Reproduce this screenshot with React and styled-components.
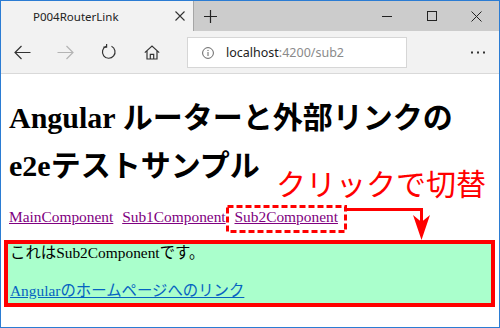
import React from 'react';
import styled, { createGlobalStyle } from 'styled-components';

const GlobalStyle = createGlobalStyle`
	html, body {
		margin: 0;
		padding: 0;
		width: 500px;
		height: 328px;
		overflow: hidden;
		background: #fff;
	}
	* {
		box-sizing: border-box;
	}
`;

const uiFont = `"Noto Sans", "Noto Sans CJK JP", sans-serif`;
const pageFont = `"Liberation Serif", "Noto Sans CJK JP", serif`;

export default function App() {
	return (
		<>
			<GlobalStyle />
			<Window>
				<TabStrip>
					<Tab>
						<TabTitle>P004RouterLink</TabTitle>
						<TabClose>
							<svg width="10" height="10" viewBox="0 0 10 10">
								<path d="M0.5 0.5 L9.5 9.5 M9.5 0.5 L0.5 9.5" stroke="#333" strokeWidth="1.1" />
							</svg>
						</TabClose>
					</Tab>
					<NewTab>
						<svg width="13" height="13" viewBox="0 0 13 13">
							<path d="M6.5 0 V13 M0 6.5 H13" stroke="#222" strokeWidth="1.2" />
						</svg>
					</NewTab>
					<Spacer />
					<WinButton>
						<svg width="10" height="10" viewBox="0 0 10 10">
							<path d="M0 5.5 H10" stroke="#222" strokeWidth="1" />
						</svg>
					</WinButton>
					<WinButton>
						<svg width="10" height="10" viewBox="0 0 10 10">
							<rect x="0.5" y="0.5" width="9" height="9" fill="none" stroke="#222" strokeWidth="1" />
						</svg>
					</WinButton>
					<WinButton>
						<svg width="11" height="11" viewBox="0 0 11 11">
							<path d="M0.5 0.5 L10.5 10.5 M10.5 0.5 L0.5 10.5" stroke="#222" strokeWidth="1" />
						</svg>
					</WinButton>
				</TabStrip>

				<NavBar>
					<NavButton>
						<svg width="17" height="15" viewBox="0 0 17 15">
							<path d="M1 7.5 H16.5 M7.5 1 L1 7.5 L7.5 14" fill="none" stroke="#333" strokeWidth="1.2" />
						</svg>
					</NavButton>
					<NavButton>
						<svg width="17" height="15" viewBox="0 0 17 15">
							<path d="M0.5 7.5 H16 M9.5 1 L16 7.5 L9.5 14" fill="none" stroke="#b4b4b4" strokeWidth="1.2" />
						</svg>
					</NavButton>
					<NavButton>
						<svg width="16" height="16" viewBox="0 0 16 16">
							<path d="M5.2 2.2 A6.3 6.3 0 1 0 10.5 2.3" fill="none" stroke="#333" strokeWidth="1.2" />
							<path d="M5.6 0 V3.1 H2.4" fill="none" stroke="#333" strokeWidth="1.2" />
						</svg>
					</NavButton>
					<NavButton>
						<svg width="16" height="15" viewBox="0 0 16 15">
							<path
								d="M0.8 7.6 L8 1 L15.2 7.6 M3 5.6 V14 H13 V5.6 M6.3 14 V9.3 H9.7 V14"
								fill="none"
								stroke="#333"
								strokeWidth="1.2"
							/>
						</svg>
					</NavButton>
					<Address>
						<InfoIcon>
							<svg width="12" height="12" viewBox="0 0 12 12">
								<circle cx="6" cy="6" r="5.4" fill="none" stroke="#666" strokeWidth="1" />
								<path d="M6 5 V9" stroke="#666" strokeWidth="1" />
								<circle cx="6" cy="3.4" r="0.6" fill="#666" />
							</svg>
						</InfoIcon>
						<Host>localhost</Host>
						<UrlRest>:4200/sub2</UrlRest>
					</Address>
					<Spacer />
					<NavButton>
						<svg width="14" height="3" viewBox="0 0 14 3">
							<rect x="0" y="0.5" width="2" height="2" fill="#333" />
							<rect x="6" y="0.5" width="2" height="2" fill="#333" />
							<rect x="12" y="0.5" width="2" height="2" fill="#333" />
						</svg>
					</NavButton>
				</NavBar>

				<Page>
					<Title>Angular ルーターと外部リンクのe2eテストサンプル</Title>
					<Links>
						<RouteLink href="#main">MainComponent</RouteLink>{' '}
						<RouteLink href="#sub1">Sub1Component</RouteLink>{' '}
						<RouteLink href="#sub2">Sub2Component</RouteLink>
					</Links>
					<Outlet>
						<Message>これはSub2Componentです。</Message>
						<ExternalLink href="#angular">Angularのホームページへのリンク</ExternalLink>
					</Outlet>
				</Page>

				<Overlay width="500" height="328" viewBox="0 0 500 328">
					<rect
						x="227.5"
						y="206.5"
						width="118"
						height="25"
						fill="none"
						stroke="#ff0000"
						strokeWidth="3"
						strokeDasharray="6 3"
					/>
					<polyline points="345,209.5 421.5,209.5 421.5,224" fill="none" stroke="#ff0000" strokeWidth="3" />
					<path d="M413 215 L421.5 222 L430 215 L421.5 240 Z" fill="#ff0000" />
				</Overlay>
				<Callout>クリックで切替</Callout>
			</Window>
		</>
	);
}

const Window = styled.div`
	position: relative;
	display: flex;
	flex-direction: column;
	width: 500px;
	height: 328px;
	border: 1px solid #2b7cd3;
	overflow: hidden;
	background: #fff;
`;

const TabStrip = styled.div`
	display: flex;
	align-items: stretch;
	height: 30px;
	background-color: #cccccc;
	font-family: ${uiFont};
`;

const Tab = styled.div`
	display: flex;
	align-items: center;
	width: 193px;
	padding-left: 32px;
	background-color: #f2f2f2;
	border-right: 1px solid #a6a6a6;
`;

const TabTitle = styled.span`
	flex: 1;
	font-size: 11.5px;
	color: #222;
	white-space: nowrap;
`;

const IconButton = styled.div`
	display: flex;
	align-items: center;
	justify-content: center;
	flex-shrink: 0;
`;

const TabClose = styled(IconButton)`
	width: 26px;
	height: 100%;
`;

const NewTab = styled(IconButton)`
	width: 33px;
	height: 100%;
`;

const WinButton = styled(IconButton)`
	width: 45px;
	height: 100%;
`;

const Spacer = styled.div`
	flex: 1;
`;

const NavBar = styled.div`
	display: flex;
	align-items: center;
	height: 43px;
	background-color: #f2f2f2;
	border-bottom: 1px solid #d9d9d9;
	font-family: ${uiFont};
`;

const NavButton = styled(IconButton)`
	width: 43px;
	height: 100%;
`;

const Address = styled.div`
	display: flex;
	align-items: center;
	width: 220px;
	height: 31px;
	margin-left: 14px;
	margin-top: 1px;
	padding-left: 14px;
	background-color: #fff;
	border: 1px solid #d6d6d6;
	font-size: 12.5px;
	white-space: nowrap;
`;

const InfoIcon = styled.span`
	display: flex;
	margin-right: 12px;
`;

const Host = styled.span`
	color: #222;
`;

const UrlRest = styled.span`
	color: #8a8a8a;
`;

const Page = styled.div`
	flex: 1;
	padding: 0 8px;
	background-color: #fff;
	font-family: ${pageFont};
	font-size: 15.4px;
	color: #000;
`;

const Title = styled.h1`
	margin: 20px 0 16px;
	font-size: 30px;
	line-height: 48px;
	font-weight: bold;
`;

const Links = styled.div`
	line-height: 22px;
	white-space: nowrap;
`;

const RouteLink = styled.a`
	color: #800080;
	text-decoration: underline;
	margin-right: 5px;
`;

const Outlet = styled.div`
	margin: 12px -4px 0 -5px;
	padding: 0 0 4px 2px;
	background-color: #aaffcc;
	border: 4px solid #ff0000;
	line-height: 17px;
`;

const Message = styled.p`
	margin: 0 0 21px;
`;

const ExternalLink = styled.a`
	color: #0563c1;
	text-decoration: underline;
`;

const Overlay = styled.svg`
	position: absolute;
	left: -1px;
	top: -1px;
	pointer-events: none;
`;

const Callout = styled.span`
	position: absolute;
	left: 275px;
	top: 166px;
	font-family: "Noto Sans CJK JP", sans-serif;
	font-size: 30px;
	line-height: 30px;
	color: #ff0000;
	white-space: nowrap;
`;
